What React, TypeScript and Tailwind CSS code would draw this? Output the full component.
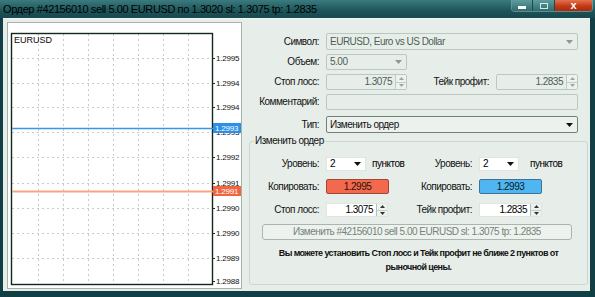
import React from 'react';

const font = "font-['Liberation_Sans_Narrow','Liberation_Sans',sans-serif]";

const levels = [
  { y: 35, label: '1.2995' },
  { y: 60, label: '1.2994' },
  { y: 84, label: '1.2994' },
  { y: 109, label: '1.2993' },
  { y: 134, label: '1.2992' },
  { y: 160, label: '1.2991' },
  { y: 185, label: '1.2990' },
  { y: 210, label: '1.2990' },
  { y: 235, label: '1.2989' },
];
const cols = [30, 55, 80, 105, 130, 155, 180];

function Chart() {
  return (
    <div className="w-[235px] h-[267px] border border-[#a3b3a8] bg-white shrink-0">
      <svg width="233" height="265" className="block" fontFamily="Liberation Sans, sans-serif">
        {cols.map((x) => (
          <line key={x} x1={x + 0.5} y1={11} x2={x + 0.5} y2={261} stroke="#c6ccc7" strokeDasharray="2 3" />
        ))}
        {levels.map((l) => (
          <line key={l.y} x1={4} y1={l.y + 0.5} x2={204} y2={l.y + 0.5} stroke="#c6ccc7" strokeDasharray="2 3" />
        ))}
        <rect x={3.5} y={10.5} width={201} height={251} fill="none" stroke="#0f2a1a" strokeWidth={1.4} />
        {[...levels, { y: 258, label: '1.2988' }].map((l) => (
          <g key={'t' + l.y}>
            <line x1={204} y1={l.y + 0.5} x2={207} y2={l.y + 0.5} stroke="#123020" />
            <text x={208} y={l.y + 3} fontSize={8} fill="#111" letterSpacing={-0.2}>{l.label}</text>
          </g>
        ))}
        <text x={6} y={20} fontSize={9} fill="#0a0a0a">EURUSD</text>
        {/* bid / ask */}
        <line x1={4} y1={105.5} x2={205} y2={105.5} stroke="#3a96ea" strokeWidth={1.5} />
        <rect x={205} y={100} width={28} height={10} fill="#2d8fe8" />
        <text x={207} y={108} fontSize={8} fill="#fff" letterSpacing={-0.2}>1.2993</text>
        <line x1={4} y1={168.5} x2={205} y2={168.5} stroke="#f7a385" strokeWidth={2} />
        <rect x={205} y={163} width={28} height={10} fill="#f0663f" />
        <text x={207} y={171} fontSize={8} fill="#fff" letterSpacing={-0.2}>1.2991</text>
      </svg>
    </div>
  );
}

function Arrow({ dim }: { dim?: boolean }) {
  return (
    <svg width="7" height="4" viewBox="0 0 7 4" className="shrink-0">
      <path d="M0 0h7L3.5 4z" fill={dim ? '#8c9a90' : '#111'} />
    </svg>
  );
}

function Spinner({ dim }: { dim?: boolean }) {
  const c = dim ? '#9aa79e' : '#333';
  return (
    <div className={`w-[11px] h-full flex flex-col border-l ${dim ? 'border-[#c3cdc6]' : 'border-[#b6c0b9]'} bg-[#eef2ef]`}>
      <div className="flex-1 flex items-center justify-center border-b border-[#c3cdc6]">
        <svg width="5" height="3" viewBox="0 0 5 3"><path d="M0 3h5L2.5 0z" fill={c} /></svg>
      </div>
      <div className="flex-1 flex items-center justify-center">
        <svg width="5" height="3" viewBox="0 0 5 3"><path d="M0 0h5L2.5 3z" fill={c} /></svg>
      </div>
    </div>
  );
}

function Label({ w, children }: { w: string; children: React.ReactNode }) {
  return <span className={`${w} shrink-0 text-right pr-[7px] text-[#111]`}>{children}</span>;
}

function OrderForm() {
  return (
    <div className="flex-1 flex flex-col pt-[11px] pr-[12px] text-[10px] leading-[12px] tracking-[-0.5px]">
      <div className="flex flex-col gap-[4px]">
        <div className="flex items-center h-[17px]">
          <Label w="w-[84px]">Символ:</Label>
          <div className="flex-1 h-full flex items-center justify-between pl-[3px] pr-[4px] border border-[#bcc8bf] rounded-[2px] text-[#4e5e54]">
            EURUSD, Euro vs US Dollar
            <Arrow dim />
          </div>
        </div>
        <div className="flex items-center h-[16px]">
          <Label w="w-[84px]">Объем:</Label>
          <div className="w-[81px] h-full flex items-center justify-between pl-[3px] pr-[4px] border border-[#bcc8bf] rounded-[2px] text-[#4e5e54]">
            5.00
            <Arrow dim />
          </div>
        </div>
        <div className="flex items-center h-[16px]">
          <Label w="w-[84px]">Стоп лосс:</Label>
          <div className="w-[81px] h-full flex items-center border border-[#bcc8bf] rounded-[2px] text-[#4e5e54]">
            <span className="flex-1 text-right pr-[3px]">1.3075</span>
            <Spinner dim />
          </div>
          <Label w="w-[89px]">Тейк профит:</Label>
          <div className="flex-1 h-full flex items-center border border-[#bcc8bf] rounded-[2px] text-[#4e5e54]">
            <span className="flex-1 text-right pr-[3px]">1.2835</span>
            <Spinner dim />
          </div>
        </div>
        <div className="flex items-center h-[16px]">
          <Label w="w-[84px]">Комментарий:</Label>
          <div className="flex-1 h-full border border-[#bcc8bf] rounded-[2px]" />
        </div>
        <div className="flex items-center h-[17px] mt-[2px]">
          <Label w="w-[84px]">Тип:</Label>
          <div className="flex-1 h-full flex items-center justify-between pl-[3px] pr-[4px] border border-[#6f8276] rounded-[2px] bg-[#ecf1ed] text-[#111]">
            Изменить ордер
            <Arrow />
          </div>
        </div>
      </div>

      <fieldset className="ml-[7px] mr-[-10px] mt-[2px] border border-[#ccd6cf] rounded-[3px] pb-[10px]">
        <legend className="ml-[4px] px-[1px] leading-[12px] text-[#111]">Изменить ордер</legend>
        <div className="flex items-center h-[14px] mt-[10px]">
          <Label w="w-[76px]">Уровень:</Label>
          <div className="w-[80px] flex items-center">
            <div className="w-[40px] h-[14px] flex items-center justify-between pl-[3px] pr-[4px] bg-white border border-[#dfe5e0]">
              2
              <Arrow />
            </div>
            <span className="ml-[6px]">пунктов</span>
          </div>
          <Label w="w-[73px]">Уровень:</Label>
          <div className="flex items-center">
            <div className="w-[40px] h-[14px] flex items-center justify-between pl-[3px] pr-[4px] bg-white border border-[#dfe5e0]">
              2
              <Arrow />
            </div>
            <span className="ml-[11px]">пунктов</span>
          </div>
        </div>
        <div className="flex items-center h-[15px] mt-[8px]">
          <Label w="w-[76px]">Копировать:</Label>
          <div className="w-[80px]">
            <div className="w-[63px] h-[15px] flex items-center justify-center bg-[#f4694d] border border-[#9c4a36] rounded-[2px] text-[#2a120a]">
              1.2995
            </div>
          </div>
          <Label w="w-[73px]">Копировать:</Label>
          <div className="w-[63px] h-[15px] flex items-center justify-center bg-[#50b6f2] border border-[#3f7394] rounded-[2px] text-[#0b1a26]">
            1.2993
          </div>
        </div>
        <div className="flex items-center h-[14px] mt-[9px]">
          <Label w="w-[76px]">Стоп лосс:</Label>
          <div className="w-[80px]">
            <div className="w-[62px] h-[14px] flex items-center bg-white border border-[#dfe5e0]">
              <span className="flex-1 text-right pr-[3px]">1.3075</span>
              <Spinner />
            </div>
          </div>
          <Label w="w-[73px]">Тейк профит:</Label>
          <div className="w-[63px] h-[14px] flex items-center bg-white border border-[#dfe5e0]">
            <span className="flex-1 text-right pr-[3px]">1.2835</span>
            <Spinner />
          </div>
        </div>
        <div className="ml-[12px] w-[310px] h-[16px] mt-[7px] flex items-center justify-center border border-[#a9b5ad] rounded-[3px] bg-[#edf2ee] text-[#75837a]">
          Изменить #42156010 sell 5.00 EURUSD sl: 1.3075 tp: 1.2835
        </div>
        <p className="mt-[6px] text-center font-bold text-[9px] tracking-[-0.6px] leading-[14px] text-[#111] whitespace-nowrap">
          Вы можете установить Стоп лосс и Тейк профит не ближе 2 пунктов от
          <br />
          рыночной цены.
        </p>
      </fieldset>
    </div>
  );
}

export default function App() {
  return (
    <div className={`w-[595px] h-[297px] flex flex-col bg-[#123f45] overflow-hidden ${font}`}>
      {/* title bar */}
      <div className="h-[18px] shrink-0 flex items-start bg-[linear-gradient(to_bottom,#3a7b7e,#1d5459_60%,#17484e)]">
        <span className="ml-[3px] mt-[3px] text-[11px] leading-[12px] tracking-[-0.4px] text-black">
          Ордер #42156010 sell 5.00 EURUSD по 1.3020 sl: 1.3075 tp: 1.2835
        </span>
        <div className="ml-auto mr-[2px] flex h-[12px] border border-t-0 border-[#8fb4b4]/60 rounded-b-[4px] overflow-hidden">
          <div className="w-[21px] flex items-center justify-center bg-[linear-gradient(to_bottom,#5f9c9e,#2e6c70)] border-r border-[#1d4a4e]">
            <div className="w-[8px] h-[3px] bg-white mt-[3px]" />
          </div>
          <div className="w-[22px] flex items-center justify-center bg-[linear-gradient(to_bottom,#5f9c9e,#2e6c70)] border-r border-[#1d4a4e]">
            <div className="w-[8px] h-[6px] border border-white/80" />
          </div>
          <div className="w-[37px] flex items-center justify-center bg-[linear-gradient(to_bottom,#e4724e,#c23a16_55%,#a92a0c)]">
            <span className="text-[11px] leading-[11px] font-bold text-white">x</span>
          </div>
        </div>
      </div>
      {/* client area */}
      <div className="h-[273px] ml-[3px] mr-[5px] flex pt-[3px] pl-[4px] bg-[#e7eee9] border-t border-[#f3f7f4]">
        <Chart />
        <OrderForm />
      </div>
    </div>
  );
}
